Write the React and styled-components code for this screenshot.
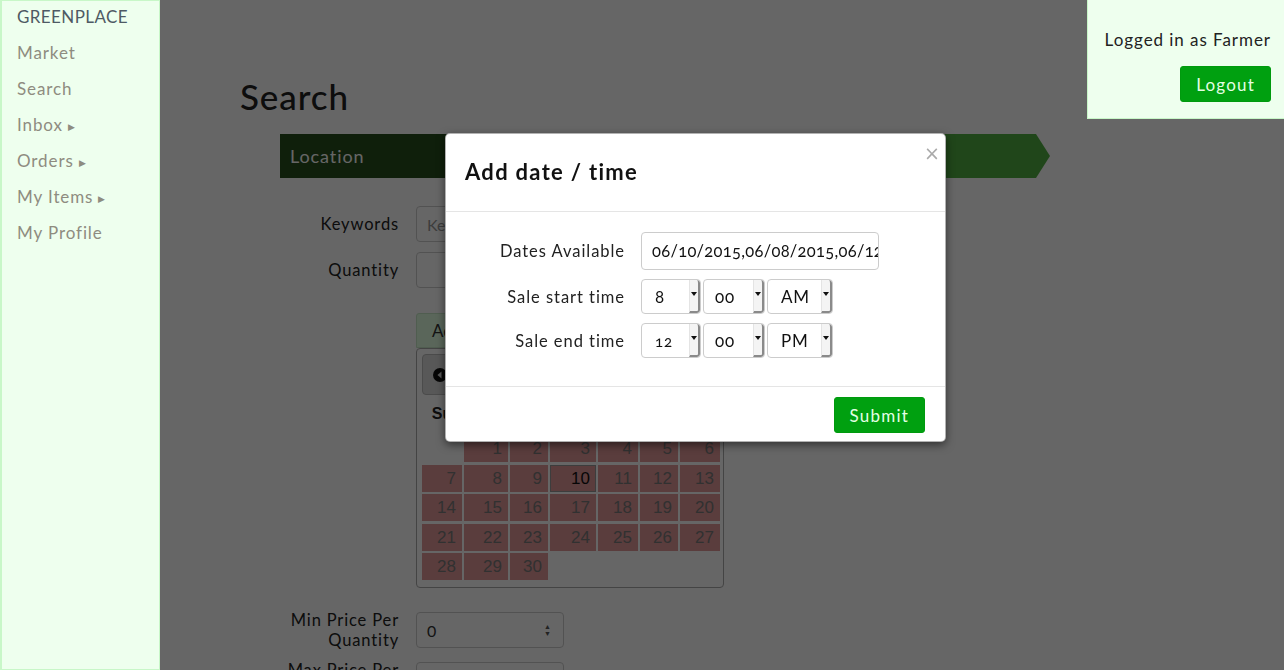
import React from "react";
import styled, { createGlobalStyle } from "styled-components";

const GlobalStyle = createGlobalStyle`
  html, body { margin: 0; padding: 0; background: #fff; }
  body {
    font-family: Lato, "Open Sans", sans-serif;
    color: #333;
    font-size: 16px;
    overflow: hidden;
  }
  * { box-sizing: border-box; }
`;

const Sidebar = styled.nav`
  position: fixed;
  top: 0;
  left: 0;
  bottom: 0;
  width: 160px;
  background: #eeffee;
  border: 1px solid #c8f7c8;
  border-left-width: 2px;
  z-index: 30;
  display: flex;
  flex-direction: column;
  padding: 4px 0 0 15px;
`;

const NavItem = styled.div`
  height: 36px;
  line-height: 24px;
  font-size: 17px;
  letter-spacing: ${(p) => (p.$brand ? 0.4 : 0.9)}px;
  color: ${(p) => (p.$brand ? "#4e5a64" : "#8e8c80")};
`;

const Caret = styled.span`
  font-size: 9px;
  margin-left: 5px;
  vertical-align: 1px;
`;

const LoginBox = styled.div`
  position: fixed;
  top: 0;
  right: 0;
  width: 197px;
  height: 119px;
  background: #eeffee;
  border-left: 1px solid #c8f7c8;
  border-bottom: 1px solid #c8f7c8;
  z-index: 30;
  display: flex;
  flex-direction: column;
  align-items: flex-end;
  padding: 29px 13px 0 0;
`;

const LoginText = styled.div`
  font-size: 17px;
  letter-spacing: 0.95px;
  color: #222;
  line-height: 22px;
`;

const GreenButton = styled.button`
  background: #00a010;
  border: 1px solid #009a0e;
  border-radius: 3px;
  color: #e4ffe4;
  font-family: inherit;
  font-size: 17px;
  letter-spacing: 1.2px;
  height: 36px;
  padding: 0 15px;
  margin-top: ${(p) => p.$mt || 0}px;
`;

const Main = styled.main`
  margin-left: 160px;
  padding: 74px 0 0 80px;
`;

const Title = styled.h1`
  margin: 0;
  font-size: 35px;
  font-weight: 500;
  color: #222;
  letter-spacing: 0.9px;
  line-height: 44px;
`;

const Steps = styled.div`
  margin: 16px 0 0 40px;
  width: 770px;
  height: 44px;
  display: flex;
  background: #52af43;
  clip-path: polygon(0 0, 756px 0, 770px 50%, 756px 100%, 0 100%);
`;

const Step = styled.div`
  width: 200px;
  background: #264e1c;
  color: #fff;
  font-size: 18px;
  letter-spacing: 0.9px;
  padding-left: 10px;
  display: flex;
  align-items: center;
`;

const Form = styled.div`
  display: flex;
  flex-direction: column;
  margin-top: ${(p) => p.$mt || 0}px;
`;

const Row = styled.div`
  display: grid;
  grid-template-columns: 119px 1fr;
  column-gap: 17px;
  align-items: ${(p) => p.$align || "center"};
  margin-bottom: ${(p) => p.$mb || 10}px;
  margin-left: 40px;
`;

const Label = styled.label`
  text-align: right;
  font-size: 16.5px;
  letter-spacing: 0.85px;
  line-height: 20px;
  color: #222;
`;

const Input = styled.div`
  width: ${(p) => p.$w || 300}px;
  height: 36px;
  border: 1px solid #ccc;
  border-radius: 4px;
  background: #fff;
  display: flex;
  align-items: center;
  justify-content: space-between;
  padding: 0 12px 0 10px;
  font-size: 16px;
  color: ${(p) => (p.$placeholder ? "#999" : "#333")};
`;

const Spinner = styled.span`
  font-size: 7px;
  line-height: 7px;
  color: #555;
  display: flex;
  flex-direction: column;
`;

const Picker = styled.div`
  display: flex;
  flex-direction: column;
`;

const PickerTab = styled.div`
  width: 160px;
  height: 35px;
  background: #e2ffe2;
  border: 1px solid #c8e8c8;
  border-radius: 3px 3px 0 0;
  font-size: 17px;
  padding-left: 15px;
  display: flex;
  align-items: center;
  color: #333;
`;

const Calendar = styled.div`
  width: 308px;
  border: 1px solid #aaa;
  border-radius: 4px;
  padding: 5px 4px 7px 5px;
  background: #fff;
  font-family: "Liberation Sans", Arial, sans-serif;
`;

const CalHeader = styled.div`
  height: 41px;
  border: 1px solid #bbb;
  border-radius: 4px;
  background: #dcdcdc;
  display: flex;
  align-items: center;
  padding-left: 10px;
`;

const WeekRow = styled.div`
  display: grid;
  grid-template-columns: 40px 44px 38px 46px 40px 38px 40px;
  column-gap: 2px;
  margin: 10px 0 12px 0;
  font-weight: bold;
  font-size: 16px;
  color: #222;
  text-align: center;
`;

const DayGrid = styled.div`
  display: grid;
  grid-template-columns: 40px 44px 38px 46px 40px 38px 40px;
  grid-auto-rows: 27px;
  gap: 2.5px 2px;
`;

const Day = styled.div`
  background: ${(p) => (p.$empty ? "transparent" : "#e29898")};
  border: 1px solid ${(p) => (p.$today ? "#9a9a9a" : "transparent")};
  text-align: right;
  padding-right: 5px;
  font-size: 17px;
  line-height: 25px;
  color: ${(p) => (p.$today ? "#111" : "#7a7a7a")};
`;

const Backdrop = styled.div`
  position: fixed;
  inset: 0;
  background: rgba(0, 0, 0, 0.6);
  z-index: 20;
`;

const Modal = styled.div`
  position: fixed;
  top: 133px;
  left: 445px;
  width: 501px;
  background: #fff;
  border: 1px solid rgba(0, 0, 0, 0.3);
  border-radius: 5px;
  box-shadow: 0 3px 9px rgba(0, 0, 0, 0.5);
  z-index: 40;
  display: flex;
  flex-direction: column;
`;

const ModalHeader = styled.div`
  height: 78px;
  border-bottom: 1px solid #e5e5e5;
  display: flex;
  align-items: flex-start;
  justify-content: space-between;
  padding: 23px 5px 0 19px;
`;

const ModalTitle = styled.h4`
  margin: 0;
  font-size: 22px;
  font-weight: 700;
  letter-spacing: 1.3px;
  color: #111;
  line-height: 30px;
`;

const Close = styled.span`
  font-size: 19px;
  line-height: 16px;
  margin-top: -12px;
  color: #aaa;
  font-family: "DejaVu Sans", sans-serif;
`;

const ModalBody = styled.div`
  height: 175px;
  border-bottom: 1px solid #e5e5e5;
  padding: 20px 0 0 0;
  display: flex;
  flex-direction: column;
  gap: 9px;
`;

const FieldRow = styled.div`
  display: grid;
  grid-template-columns: 179px auto;
  column-gap: 16px;
  align-items: center;
`;

const FieldLabel = styled.label`
  text-align: right;
  font-size: 16.5px;
  letter-spacing: 0.95px;
  color: #222;
`;

const DateInput = styled.div`
  width: 238px;
  height: 38px;
  border: 1px solid #ccc;
  border-radius: 4px;
  padding: 0 0 0 10px;
  display: flex;
  align-items: center;
  overflow: hidden;
  white-space: nowrap;
  font-size: 16.5px;
  letter-spacing: 0.3px;
  color: #111;
  font-variant-numeric: oldstyle-nums;
`;

const Selects = styled.div`
  display: flex;
  gap: 2px;
`;

const Select = styled.div`
  width: ${(p) => p.$w}px;
  height: 35px;
  border: 1px solid #ccc;
  border-radius: 4px;
  display: flex;
  background: #fff;
  overflow: hidden;
`;

const SelectValue = styled.div`
  flex: 1;
  display: flex;
  align-items: center;
  padding-left: ${(p) => p.$pl || 13}px;
  font-size: ${(p) => p.$fs || 17}px;
  letter-spacing: 0.8px;
  color: #111;
  font-variant-numeric: oldstyle-nums;
`;

const SelectArrow = styled.div`
  width: 11px;
  border-left: 1px solid #e4e4e4;
  border-right: 2px solid #8a8a8a;
  border-bottom: 2px solid #8a8a8a;
  border-radius: 0 3px 3px 0;
  background: #f4f4f4;
  display: flex;
  justify-content: center;
  padding-top: 12px;
  &::after {
    content: "";
    border-left: 3px solid transparent;
    border-right: 3px solid transparent;
    border-top: 4px solid #111;
    height: 0;
  }
`;

const ModalFooter = styled.div`
  display: flex;
  justify-content: flex-end;
  padding: 10px 20px 8px 0;
`;

const calendarDays = [
  null, 1, 2, 3, 4, 5, 6,
  7, 8, 9, 10, 11, 12, 13,
  14, 15, 16, 17, 18, 19, 20,
  21, 22, 23, 24, 25, 26, 27,
  28, 29, 30,
];

const navItems = [
  { label: "Market" },
  { label: "Search" },
  { label: "Inbox", caret: true },
  { label: "Orders", caret: true },
  { label: "My Items", caret: true },
  { label: "My Profile" },
];

function PrevIcon() {
  return (
    <svg width="14" height="14" viewBox="0 0 14 14">
      <circle cx="7" cy="7" r="7" fill="#111" />
      <path d="M8.5 3.5 L4.5 7 L8.5 10.5 Z" fill="#ddd" />
    </svg>
  );
}

function TimeSelect({ w, value, pl, fs }) {
  return (
    <Select $w={w}>
      <SelectValue $pl={pl} $fs={fs}>{value}</SelectValue>
      <SelectArrow />
    </Select>
  );
}

export default function App() {
  return (
    <>
      <GlobalStyle />
      <Sidebar>
        <NavItem $brand>GREENPLACE</NavItem>
        {navItems.map((n) => (
          <NavItem key={n.label}>
            {n.label}
            {n.caret && <Caret>▶</Caret>}
          </NavItem>
        ))}
      </Sidebar>
      <LoginBox>
        <LoginText>Logged in as Farmer</LoginText>
        <GreenButton $mt={15}>Logout</GreenButton>
      </LoginBox>

      <Main>
        <Title>Search</Title>
        <Steps>
          <Step>Location</Step>
        </Steps>
        <Form $mt={28}>
          <Row>
            <Label>Keywords</Label>
            <Input $placeholder>Keywords</Input>
          </Row>
          <Row $mb={25}>
            <Label>Quantity</Label>
            <Input />
          </Row>
          <Row $align="start" $mb={22}>
            <span />
            <Picker>
              <PickerTab>Add date / time</PickerTab>
              <Calendar>
                <CalHeader>
                  <PrevIcon />
                </CalHeader>
                <WeekRow>
                  {["Su", "Mo", "Tu", "We", "Th", "Fr", "Sa"].map((d) => (
                    <span key={d}>{d}</span>
                  ))}
                </WeekRow>
                <DayGrid>
                  {calendarDays.map((d, i) =>
                    d === null ? (
                      <Day key={i} $empty />
                    ) : (
                      <Day key={i} $today={d === 10}>
                        {d}
                      </Day>
                    )
                  )}
                </DayGrid>
              </Calendar>
            </Picker>
          </Row>
          <Row>
            <Label>Min Price Per Quantity</Label>
            <Input $w={148}>
              0
              <Spinner>
                <span>▲</span>
                <span>▼</span>
              </Spinner>
            </Input>
          </Row>
          <Row>
            <Label>Max Price Per Quantity</Label>
            <Input $w={148} />
          </Row>
        </Form>
      </Main>

      <Backdrop />

      <Modal>
        <ModalHeader>
          <ModalTitle>Add date / time</ModalTitle>
          <Close>×</Close>
        </ModalHeader>
        <ModalBody>
          <FieldRow>
            <FieldLabel>Dates Available</FieldLabel>
            <DateInput>06/10/2015,06/08/2015,06/12/2015</DateInput>
          </FieldRow>
          <FieldRow>
            <FieldLabel>Sale start time</FieldLabel>
            <Selects>
              <TimeSelect w={60} value="8" />
              <TimeSelect w={62} value="00" pl={11} />
              <TimeSelect w={66} value="AM" />
            </Selects>
          </FieldRow>
          <FieldRow>
            <FieldLabel>Sale end time</FieldLabel>
            <Selects>
              <TimeSelect w={60} value="12" fs={15} />
              <TimeSelect w={62} value="00" pl={11} />
              <TimeSelect w={66} value="PM" />
            </Selects>
          </FieldRow>
        </ModalBody>
        <ModalFooter>
          <GreenButton>Submit</GreenButton>
        </ModalFooter>
      </Modal>
    </>
  );
}
